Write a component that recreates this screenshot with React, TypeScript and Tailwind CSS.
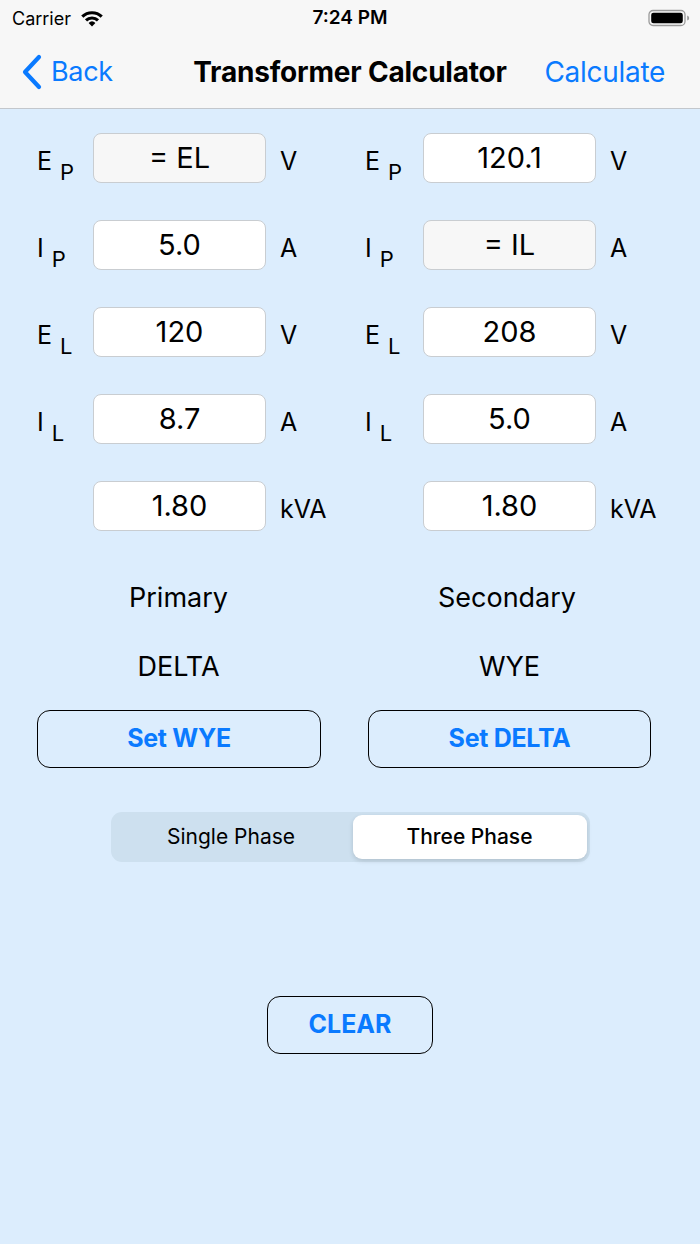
import React from "react";

const font = { fontFamily: '"Inter", "Liberation Sans", sans-serif' };

type Row = {
  sym?: string;
  sub?: string;
  value: string;
  unit: string;
  locked?: boolean;
};

const primaryRows: Row[] = [
  { sym: "E", sub: "P", value: "= EL", unit: "V", locked: true },
  { sym: "I", sub: "P", value: "5.0", unit: "A" },
  { sym: "E", sub: "L", value: "120", unit: "V" },
  { sym: "I", sub: "L", value: "8.7", unit: "A" },
  { value: "1.80", unit: "kVA" },
];

const secondaryRows: Row[] = [
  { sym: "E", sub: "P", value: "120.1", unit: "V" },
  { sym: "I", sub: "P", value: "= IL", unit: "A", locked: true },
  { sym: "E", sub: "L", value: "208", unit: "V" },
  { sym: "I", sub: "L", value: "5.0", unit: "A" },
  { value: "1.80", unit: "kVA" },
];

function Field({ row, wide }: { row: Row; wide?: boolean }) {
  return (
    <div className="flex items-center h-[50px]">
      <div
        className={`${wide ? "w-[58px]" : "w-[56px]"} h-full flex items-start pt-[16px] text-[25px] leading-none text-black`}
      >
        {row.sym && (
          <>
            <span>{row.sym}</span>
            <span className="ml-[8px] mt-[12px] text-[22px]">{row.sub}</span>
          </>
        )}
      </div>
      <div
        className={`w-[173px] h-[50px] rounded-[8px] border border-[#c9cdd1] flex items-center justify-center text-[29px] text-black ${
          row.locked ? "bg-[#f7f7f7]" : "bg-white"
        }`}
      >
        {row.value}
      </div>
      <div className="ml-[14px] pt-[7px] text-[25px] text-black">{row.unit}</div>
    </div>
  );
}

function Wifi() {
  return (
    <svg width="24" height="18" viewBox="0 0 24 18">
      <path d="M12 17.5 L8.6 13.9 A5 5 0 0 1 15.4 13.9 Z" fill="#000" />
      <path d="M4.9 10.3 A10.3 10.3 0 0 1 19.1 10.3 L16.9 12.5 A7.2 7.2 0 0 0 7.1 12.5 Z" fill="#000" />
      <path d="M1.2 6.6 A15.6 15.6 0 0 1 22.8 6.6 L20.6 8.8 A12.4 12.4 0 0 0 3.4 8.8 Z" fill="#000" />
    </svg>
  );
}

function Battery() {
  return (
    <svg width="42" height="18" viewBox="0 0 42 18">
      <rect x="1" y="1.5" width="36" height="15" rx="4" fill="none" stroke="#9a9a9a" strokeWidth="1.3" />
      <rect x="3.2" y="3.7" width="31.6" height="10.6" rx="2.3" fill="#000" />
      <path d="M39.2 6.5 Q41.2 7 41.2 9 Q41.2 11 39.2 11.5 Z" fill="#9a9a9a" />
    </svg>
  );
}

export default function App() {
  return (
    <div className="w-[700px] h-[1244px] bg-[#dcedfd] flex flex-col overflow-hidden" style={font}>
      {/* Status + nav */}
      <div className="bg-[#f7f7f7] border-b border-[#c3c7cc]">
        <div className="h-[36px] flex items-center justify-between px-[12px] relative">
          <div className="flex items-center gap-[9px] text-[18px] text-black">
            <span>Carrier</span>
            <Wifi />
          </div>
          <div className="absolute left-0 right-0 top-0 h-[36px] flex items-center justify-center text-[19px] font-semibold text-black">
            7:24 PM
          </div>
          <div className="mr-[-2px]">
            <Battery />
          </div>
        </div>
        <div className="h-[72px] flex items-center justify-between relative">
          <div className="flex items-center pl-[21px] text-[#0a7aff]">
            <svg width="22" height="36" viewBox="0 0 22 36">
              <path d="M18 3 L4 18 L18 33" fill="none" stroke="#0a7aff" strokeWidth="4.2" strokeLinecap="round" strokeLinejoin="round" />
            </svg>
            <span className="ml-[8px] text-[27px] tracking-[-0.3px]">Back</span>
          </div>
          <div className="absolute inset-0 flex items-center justify-center text-[28px] font-bold text-black tracking-[-0.2px] pointer-events-none">
            Transformer Calculator
          </div>
          <div className="pr-[35px] text-[28px] text-[#0a7aff] tracking-[-0.3px]">Calculate</div>
        </div>
      </div>

      {/* Fields */}
      <div className="flex pl-[37px] pt-[24px]">
        <div className="w-[328px] flex flex-col gap-[37px]">
          {primaryRows.map((r, i) => (
            <Field key={i} row={r} />
          ))}
        </div>
        <div className="w-[330px] flex flex-col gap-[37px]">
          {secondaryRows.map((r, i) => (
            <Field key={i} row={r} wide />
          ))}
        </div>
      </div>

      {/* Primary / Secondary */}
      <div className="flex pl-[37px] gap-[48px] mt-[48px] text-black text-[27px]">
        <div className="w-[283px] flex flex-col items-center">
          <div className="h-[38px] leading-[38px]">Primary</div>
          <div className="h-[38px] leading-[38px] mt-[31px]">DELTA</div>
        </div>
        <div className="w-[283px] flex flex-col items-center">
          <div className="h-[38px] leading-[38px] -ml-[5px]">Secondary</div>
          <div className="h-[38px] leading-[38px] mt-[31px]">WYE</div>
        </div>
      </div>

      <div className="flex pl-[37px] gap-[47px] mt-[24px]">
        <button className="w-[284px] h-[58px] rounded-[13px] border-[1.5px] border-black text-[#0a7aff] font-bold text-[25px] tracking-[-0.3px]">
          Set WYE
        </button>
        <button className="w-[283px] h-[58px] rounded-[13px] border-[1.5px] border-black text-[#0a7aff] font-bold text-[25px] tracking-[-0.3px]">
          Set DELTA
        </button>
      </div>

      {/* Segmented control */}
      <div className="flex justify-center mt-[44px]">
        <div className="w-[479px] h-[50px] rounded-[11px] bg-[#cde0ef] p-[3px] flex text-[21px] text-black">
          <div className="flex-1 flex items-center justify-center pr-[4px]">Single Phase</div>
          <div className="w-[234px] flex items-center justify-center bg-white rounded-[9px] shadow-[0_2px_5px_rgba(0,0,0,0.14)] font-medium">
            Three Phase
          </div>
        </div>
      </div>

      {/* Clear */}
      <div className="flex justify-center mt-[134px]">
        <button className="w-[166px] h-[58px] rounded-[13px] border-[1.5px] border-black text-[#0a7aff] font-bold text-[25px]">
          CLEAR
        </button>
      </div>
    </div>
  );
}
